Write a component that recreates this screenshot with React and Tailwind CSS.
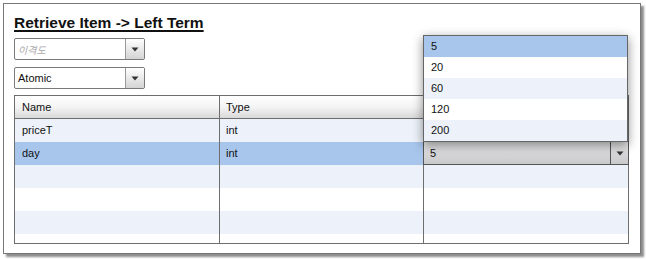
import React from "react";

const font = { fontFamily: '"Liberation Sans", Arial, sans-serif' };

function Arrow() {
  return (
    <svg width="8" height="5" viewBox="0 0 8 5">
      <path d="M0.5 0.5 L7.5 0.5 L4 4.5 Z" fill="#333" />
    </svg>
  );
}

function Combo({ children, className = "" }) {
  return (
    <div className={`flex h-[22px] w-[131px] rounded-[2px] border border-[#7a7a7a] bg-white ${className}`}>
      <div className="flex flex-1 items-center pl-[3px] text-[11px]">{children}</div>
      <div className="flex w-[19px] items-center justify-center border-l border-[#9a9a9a] bg-gradient-to-b from-white to-[#d4d4d4]">
        <Arrow />
      </div>
    </div>
  );
}

const rows = [
  { name: "priceT", type: "int", bg: "bg-[#edf2fa]" },
  { name: "day", type: "int", bg: "bg-[#a8c6ec]" },
  { name: "", type: "", bg: "bg-[#edf2fa]" },
  { name: "", type: "", bg: "bg-white" },
  { name: "", type: "", bg: "bg-[#edf2fa]" },
  { name: "", type: "", bg: "bg-white" },
];

const opts = ["5", "20", "60", "120", "200"];

export default function App() {
  return (
    <div className="relative h-[260px] w-[646px] bg-white text-[#111]" style={font}>
      <div className="pl-[3px] pt-[3px]">
        <div className="flex h-[251px] w-[638px] flex-col border border-[#777] bg-white pl-[10px] shadow-[3px_3px_2px_rgba(0,0,0,0.45)]">
          <div className="h-[34px] pt-[7px]">
            <span className="text-[15.5px] font-bold leading-[18px] underline decoration-[1.5px] underline-offset-[2px]">
              Retrieve Item -&gt; Left Term
            </span>
          </div>
          <Combo>
            <span className="italic text-[#aaa]" style={{ fontFamily: '"Noto Sans CJK KR", sans-serif', fontSize: "10px" }}>
              이격도
            </span>
          </Combo>
          <Combo className="mt-[7px]">Atomic</Combo>
          <div className="mt-[6px] h-[149px] w-[615px] overflow-hidden border border-[#6e6e6e] text-[11px]">
            <div className="grid h-[23px] grid-cols-[205px_204px_204px] border-b border-[#6e6e6e] bg-gradient-to-b from-white via-[#f4f4f4] to-[#d9d9d9]">
              <div className="flex items-center border-r border-[#6e6e6e] pl-[7px]">Name</div>
              <div className="flex items-center border-r border-[#6e6e6e] pl-[6px]">Type</div>
              <div></div>
            </div>
            {rows.map((r, i) => (
              <div key={i} className={`grid h-[23px] grid-cols-[205px_204px_204px] ${r.bg}`}>
                <div className="flex items-center border-r border-[#6e6e6e] pl-[7px]">{r.name}</div>
                <div className="flex items-center border-r border-[#6e6e6e] pl-[6px]">{r.type}</div>
                <div className={i === 1 ? "bg-[#edf2fa]" : ""}></div>
              </div>
            ))}
          </div>
        </div>
      </div>

      {/* in-cell combobox */}
      <div className="absolute left-[423px] top-[141px] flex h-[24px] w-[206px] border border-[#555] bg-gradient-to-b from-[#e9e9ea] to-[#c9c9cc] text-[11px]">
        <div className="flex flex-1 items-center pl-[6px]">5</div>
        <div className="flex w-[18px] items-center justify-center border-l border-[#555]">
          <Arrow />
        </div>
      </div>

      {/* dropdown list */}
      <div className="absolute left-[423px] top-[35px] w-[205px] border border-[#666] bg-white text-[11px] shadow-[0_3px_10px_rgba(0,0,0,0.45)]">
        {opts.map((o, i) => (
          <div
            key={o}
            className={`flex h-[21px] items-center pl-[7px] ${i === 0 ? "bg-[#a8c6ec]" : i % 2 === 0 ? "bg-[#edf2fa]" : "bg-white"}`}
          >
            {o}
          </div>
        ))}
      </div>
    </div>
  );
}
